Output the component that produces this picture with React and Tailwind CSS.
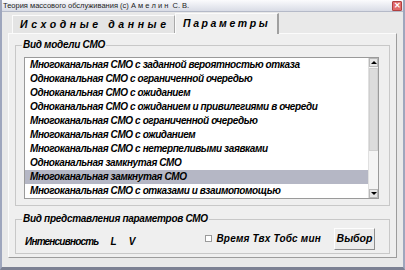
const MODELS = [
  "Многоканальная СМО с заданной вероятностью отказа",
  "Одноканальная СМО с ограниченной очередью",
  "Одноканальная СМО с ожиданием",
  "Одноканальная СМО с ожиданием и привилегиями в очереди",
  "Многоканальная СМО с ограниченной очередью",
  "Многоканальная СМО с ожиданием",
  "Многоканальная СМО с нетерпеливыми заявками",
  "Одноканальная замкнутая СМО",
  "Многоканальная замкнутая СМО",
  "Многоканальная СМО с отказами и взаимопомощью",
];

const SELECTED = 8;
const FONT = { fontFamily: '"Liberation Sans", Arial, sans-serif' };

function GroupBox({ title, className, children }) {
  return (
    <div className={`relative border border-[#c8c8c8] ${className}`}>
      <span className="absolute -top-[8px] left-[6px] bg-[#efefef] px-[1px] text-[10px] font-bold italic leading-[14px] tracking-[-0.3px] text-black">
        {title}
      </span>
      {children}
    </div>
  );
}

function ScrollBar() {
  return (
    <div className="flex w-[10px] flex-col bg-[#f4f4f4] border-l border-[#e0e0e0]">
      <div className="flex h-[9px] items-center justify-center border border-[#b8b8b8] bg-[#e6e6e6]">
        <div className="h-0 w-0 border-x-[3px] border-b-[3px] border-x-transparent border-b-black" />
      </div>
      <div className="mt-[1px] h-[83px] border border-[#cfcfcf] bg-[#dcdcdc]" />
      <div className="flex-1" />
      <div className="flex h-[9px] items-center justify-center border border-[#b8b8b8] bg-[#e6e6e6]">
        <div className="h-0 w-0 border-x-[3px] border-t-[3px] border-x-transparent border-t-black" />
      </div>
    </div>
  );
}

export default function App() {
  return (
    <div
      className="flex h-[270px] w-[405px] flex-col overflow-hidden border-x-[2px] border-b-[3px] border-x-[#9ea6bd] border-b-[#7c8193] bg-[#e9e9e9]"
      style={FONT}
    >
      <div className="flex h-[12px] items-center justify-between bg-gradient-to-b from-[#fbfbfd] to-[#d9dce6] pl-[1px] pr-[1px] border-b border-[#b5bac8]">
        <span className="text-[7.5px] leading-none text-[#222]">
          Теория массового обслуживания (c) А м е л и н&nbsp; С. В.
        </span>
        <div className="flex h-[10px] w-[10px] items-center justify-center rounded-[1px] border border-[#b04040] bg-[#e26a6a] text-[8px] font-bold leading-none text-white">
          ✕
        </div>
      </div>

      <div className="flex flex-1 flex-col px-[6px] pt-[1px]">
        <div className="flex h-[20px] items-end pl-[4px]">
          <div className="flex h-[18px] w-[163px] shrink-0 items-center whitespace-nowrap border-t border-l border-[#fbfbfb] border-r border-r-[#a9a9a9] bg-[#e4e4e4] pl-[7px] text-[10.5px] font-bold italic tracking-[3.6px] text-black">
            Исходные данные
          </div>
          <div className="relative -mb-[1px] flex h-[21px] w-[104px] shrink-0 items-center whitespace-nowrap border-t border-l border-[#fbfbfb] border-r-[2px] border-r-[#a0a0a0] bg-[#efefef] pl-[7px] text-[10.5px] font-bold italic tracking-[2.6px] text-black">
            Параметры
          </div>
        </div>

        <div className="flex h-[225px] flex-col border border-[#fbfbfb] border-r-[#9c9c9c] border-b-[#9c9c9c] bg-[#efefef] px-[6px] pt-[11px]">
          <GroupBox title="Вид модели СМО" className="h-[161px] pl-[8px] pr-[10px] pt-[11px]">
            <div className="flex h-[142px] border border-[#9a9a9a] bg-white">
              <div className="flex-1">
                {MODELS.map((m, i) => (
                  <div
                    key={m}
                    className={`h-[14px] pl-[5px] text-[10px] font-bold italic leading-[14px] tracking-[-0.4px] text-black ${
                      i === SELECTED ? "bg-[#b5b7c5]" : ""
                    }`}
                  >
                    {m}
                  </div>
                ))}
              </div>
              <ScrollBar />
            </div>
          </GroupBox>

          <GroupBox title="Вид представления параметров СМО" className="mt-[13px] flex h-[35px] items-center pl-[9px] pr-[14px]">
            <div className="mt-[9px] flex items-baseline text-[10px] font-bold italic tracking-[-0.8px]">
              <span>Интенсивность</span>
              <span className="ml-[12px]">L</span>
              <span className="ml-[13px]">V</span>
            </div>
            <div className="ml-auto mt-[4px] flex items-center">
              <div className="h-[7px] w-[7px] border border-[#9a9a9a] bg-white" />
              <span className="ml-[4px] text-[10px] font-bold italic tracking-[0.2px]">Время Твх Тобс мин</span>
              <button className="ml-[13px] flex h-[22px] w-[41px] items-center justify-center border border-[#fdfdfd] border-r-[#8e8e8e] border-b-[#8e8e8e] bg-[#ebebeb] text-[10.5px] font-bold italic">
                Выбор
              </button>
            </div>
          </GroupBox>
        </div>
      </div>
    </div>
  );
}
